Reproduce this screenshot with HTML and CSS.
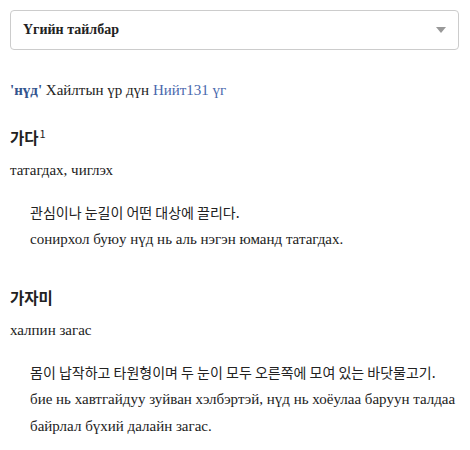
FILE: index.html
```html
<!DOCTYPE html>
<html lang="mn">
<head>
<meta charset="utf-8">
<link rel="stylesheet" href="styles.css">
</head>
<body>
<div class="page">
  <div class="select">
    <span class="select-label">Үгийн тайлбар</span>
    <span class="caret"></span>
  </div>
  <p class="summary"><b class="query">'нүд'</b> Хайлтын үр дүн <span class="total">Нийт131 үг</span></p>
  <div class="entry">
    <h3 class="word">가다<sup>1</sup></h3>
    <p class="meaning">татагдах, чиглэх</p>
    <div class="sense">
      <p class="ko">관심이나 눈길이 어떤 대상에 끌리다.</p>
      <p class="mn">сонирхол буюу нүд нь аль нэгэн юманд татагдах.</p>
    </div>
  </div>
  <div class="entry">
    <h3 class="word">가자미</h3>
    <p class="meaning">халпин загас</p>
    <div class="sense">
      <p class="ko">몸이 납작하고 타원형이며 두 눈이 모두 오른쪽에 모여 있는 바닷물고기.</p>
      <p class="mn">бие нь хавтгайдуу зуйван хэлбэртэй, нүд нь хоёулаа баруун талдаа байрлал бүхий далайн загас.</p>
    </div>
  </div>
</div>
</body>
</html>
```
FILE: styles.css
```css
html, body { margin: 0; padding: 0; background: #fff; }
body {
  font-family: "Liberation Serif", "Noto Sans CJK KR", serif;
  color: #222;
  font-size: 15px;
}
.page { padding: 10px 11px 0 10px; }
.select {
  height: 38px;
  border: 1px solid #ccc;
  border-radius: 4px;
  display: flex;
  align-items: center;
  justify-content: space-between;
  padding: 0 12px;
}
.select-label { font-weight: bold; font-size: 14px; color: #222; }
.caret {
  width: 0; height: 0;
  border-left: 5px solid transparent;
  border-right: 5px solid transparent;
  border-top: 6px solid #999;
}
.summary { margin: 30px 0 0; font-size: 15px; line-height: 20px; }
.query { color: #34548e; }
.total { color: #4a68ad; }
.entry { margin-top: 24px; }
.entry + .entry { margin-top: 31px; }
.word {
  margin: 0;
  font-family: "Noto Sans CJK KR", sans-serif;
  font-size: 15.5px;
  font-weight: bold;
  line-height: 26px;
  color: #222;
}
.word sup {
  font-size: 11px;
  font-weight: normal;
  vertical-align: top;
  line-height: 18px;
  margin-left: 1px;
}
.meaning { margin: 10px 0 0; font-size: 15px; line-height: 20px; }
.sense { padding: 18px 0 0 20px; }
.ko {
  margin: 0;
  font-family: "Noto Sans CJK KR", sans-serif;
  font-size: 14px;
  line-height: 28px;
}
.mn { margin: 0; font-size: 15px; line-height: 27px; }
```
